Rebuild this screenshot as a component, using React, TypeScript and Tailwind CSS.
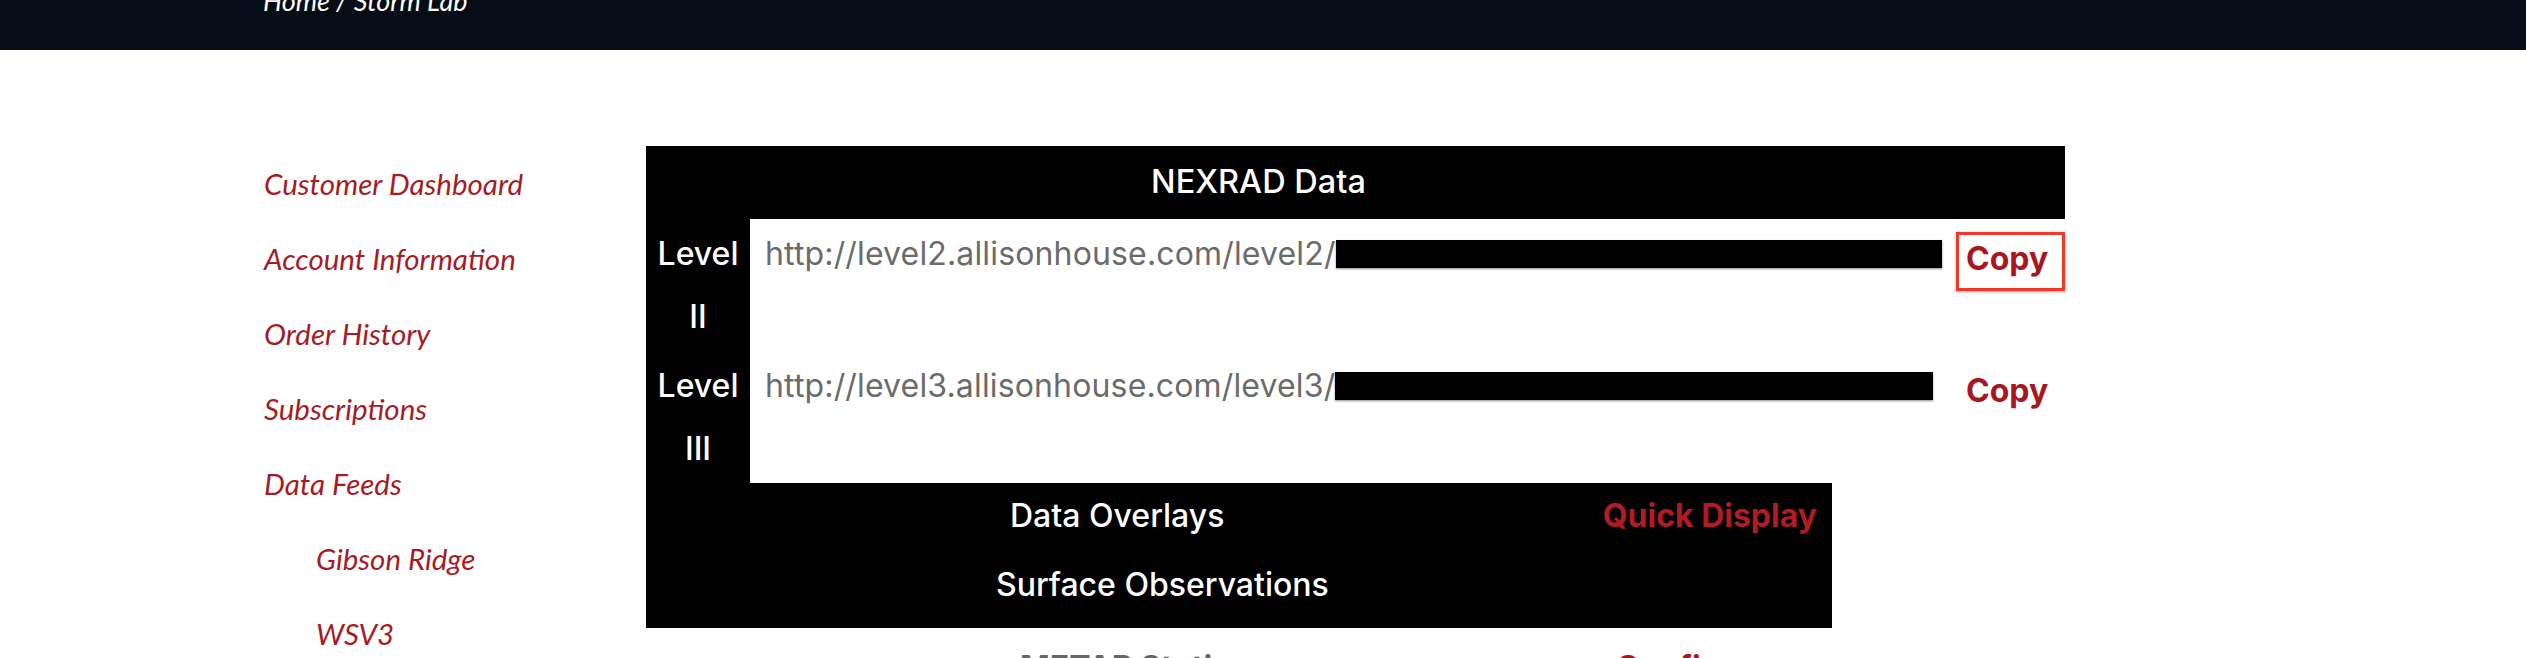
const sideLinks = [
  { label: 'Customer Dashboard', sub: false },
  { label: 'Account Information', sub: false },
  { label: 'Order History', sub: false },
  { label: 'Subscriptions', sub: false },
  { label: 'Data Feeds', sub: false },
  { label: 'Gibson Ridge', sub: true },
  { label: 'WSV3', sub: true },
];

const levels = [
  { name: 'Level', num: 'II', url: 'http://level2.allisonhouse.com/level2/', bar: 'w-[606px]', boxed: true },
  { name: 'Level', num: 'III', url: 'http://level3.allisonhouse.com/level3/', bar: 'w-[598px]', boxed: false },
];

function Sidebar() {
  return (
    <ul className="w-[382px] shrink-0 font-['Lato',sans-serif] italic text-[29.5px] leading-[75px] text-[#a51c26]">
      {sideLinks.map((l) => (
        <li key={l.label} className={l.sub ? 'pl-[52px]' : ''}>
          <a href="#">{l.label}</a>
        </li>
      ))}
    </ul>
  );
}

function NexradTable() {
  return (
    <div className="w-[1419px] bg-black">
      <div className="h-[73px] flex items-center justify-center pr-[194px] text-white text-[32.5px] font-medium">
        NEXRAD Data
      </div>
      {levels.map((lv) => (
        <div key={lv.num} className="flex h-[132px]">
          <div className="w-[104px] shrink-0 text-center text-white text-[32px] font-medium leading-[63px] pt-[3px]">
            <div>{lv.name}</div>
            <div>{lv.num}</div>
          </div>
          <div className="flex-1 bg-white flex items-start pl-[15px]">
            <div className="flex items-center h-[63px] mt-[3px] text-[32px] text-[#6b6b6b] tracking-[0.15px]">
              <span>{lv.url}</span>
              <span className={`inline-block h-[28px] ${lv.bar} bg-black shadow-[0_1px_2px_rgba(0,0,0,0.45)]`}></span>
            </div>
            <span
              className={`ml-auto mt-[13px] h-[59px] w-[109px] flex items-center pl-[7px] pb-[5px] border-[3px] text-[32px] font-bold text-[#a8161f] ${
                lv.boxed ? 'border-[#f1382b] shadow-[0_1px_3px_rgba(0,0,0,0.35)]' : 'border-transparent'
              }`}
            >
              Copy
            </span>
          </div>
        </div>
      ))}
    </div>
  );
}

function OverlayTable() {
  return (
    <div className="w-[1186px] bg-black text-[32px]">
      <div className="h-[65px] flex items-center">
        <span className="ml-[364px] text-white font-medium">Data Overlays</span>
        <span className="ml-auto mr-[15px] font-bold text-[#b01b24]">Quick Display</span>
      </div>
      <div className="h-[80px] flex items-center pb-[6px]">
        <span className="ml-[350px] text-white font-medium">Surface Observations</span>
      </div>
    </div>
  );
}

export default function App() {
  return (
    <div className="min-h-screen bg-white font-['Inter',sans-serif] overflow-hidden">
      <header className="h-[50px] bg-[#070d16] overflow-hidden pl-[263px]">
        <div className="-mt-[13px] font-['Lato',sans-serif] italic text-[27px] leading-none text-white">
          Home / Storm Lab
        </div>
      </header>
      <main className="flex pl-[264px] pt-[96px]">
        <Sidebar />
        <div className="flex flex-col">
          <NexradTable />
          <OverlayTable />
          <div className="flex w-[1186px] h-[72px] items-center text-[32px] font-bold pt-[8px]">
            <span className="ml-[374px] text-[#666]">METAR Stations</span>
            <span className="ml-auto mr-[60px] text-[#a8161f]">Configure</span>
          </div>
        </div>
      </main>
    </div>
  );
}
